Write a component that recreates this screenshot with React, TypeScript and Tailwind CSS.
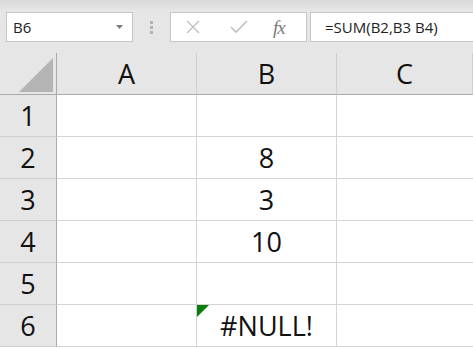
import * as React from "react";

const cols = ["A", "B", "C"];
const rows: { n: number; b: string }[] = [
  { n: 1, b: "" },
  { n: 2, b: "8" },
  { n: 3, b: "3" },
  { n: 4, b: "10" },
  { n: 5, b: "" },
  { n: 6, b: "#NULL!" },
];

function FormulaBar() {
  return (
    <div className="h-[53px] bg-[#e6e6e6] bg-gradient-to-b from-[#d9d9d9] to-[#e6e6e6] to-[20%] flex items-start pt-[12px] pl-[6px]">
      {/* name box */}
      <div className="w-[127px] h-[30px] bg-white border border-[#c6c6c6] flex items-center justify-between pl-[6px] pr-[9px] text-[15px] text-[#222]">
        <span>B6</span>
        <svg width="7" height="4" viewBox="0 0 7 4">
          <path d="M0 0 L7 0 L3.5 4 Z" fill="#7a7a7a" />
        </svg>
      </div>
      <div className="w-[37px] h-[30px] flex flex-col items-center justify-center gap-[2px]">
        <div className="w-[3px] h-[3px] bg-[#b0b0b0]" />
        <div className="w-[3px] h-[3px] bg-[#b0b0b0]" />
        <div className="w-[3px] h-[3px] bg-[#b0b0b0]" />
      </div>
      {/* cancel / enter / fx */}
      <div className="w-[137px] h-[30px] bg-white border border-[#c6c6c6] flex items-center pl-[14px]">
        <svg width="16" height="14" viewBox="0 0 16 14">
          <path d="M2 1 L14 13 M14 1 L2 13" stroke="#c0c0c0" strokeWidth="1.4" fill="none" />
        </svg>
        <svg width="18" height="14" viewBox="0 0 18 14" className="ml-[29px]">
          <path d="M1 7 L6 12 L17 1" stroke="#c0c0c0" strokeWidth="1.6" fill="none" />
        </svg>
        <span className="ml-[25px] text-[19px] italic text-[#7a7a7a] font-['Liberation_Serif',serif] leading-none tracking-[-1px]">
          fx
        </span>
      </div>
      <div className="flex-1 ml-[3px] h-[30px] bg-white border border-r-0 border-[#c6c6c6] flex items-center pl-[14px] text-[15px] text-[#222]">
        =SUM(B2,B3 B4)
      </div>
    </div>
  );
}

export default function App() {
  return (
    <div className="w-[473px] h-[348px] overflow-hidden bg-white font-['Open_Sans',sans-serif]">
      <FormulaBar />
      <div className="grid grid-cols-[57px_140px_140px_1fr] grid-rows-[42px_repeat(6,42px)] text-[27px] text-[#111] leading-none">
        {/* corner */}
        <div className="bg-[#e6e6e6] border-r border-b border-[#ababab] flex items-end justify-end pr-[3px] pb-[2px]">
          <svg width="34" height="34" viewBox="0 0 34 34">
            <path d="M34 0 L34 34 L0 34 Z" fill="#b4b4b4" />
          </svg>
        </div>
        {cols.map((c) => (
          <div
            key={c}
            className="bg-[#e6e6e6] border-b border-b-[#ababab] border-r border-r-[#cfcfcf] flex items-center justify-center"
          >
            {c}
          </div>
        ))}
        {rows.map((r) => (
          <React.Fragment key={r.n}>
            <div className="bg-[#e6e6e6] border-r border-r-[#ababab] border-b border-b-[#cfcfcf] flex items-center justify-center">
              {r.n}
            </div>
            <div className="border-r border-b border-[#d4d4d4]" />
            <div className="relative border-r border-b border-[#d4d4d4] flex items-center justify-center">
              {r.n === 6 && (
                <svg width="12" height="12" viewBox="0 0 12 12" className="absolute left-0 top-0">
                  <path d="M0 0 L12 0 L0 12 Z" fill="#0a7d0a" />
                </svg>
              )}
              {r.b}
            </div>
            <div className="border-b border-[#d4d4d4]" />
          </React.Fragment>
        ))}
      </div>
    </div>
  );
}
